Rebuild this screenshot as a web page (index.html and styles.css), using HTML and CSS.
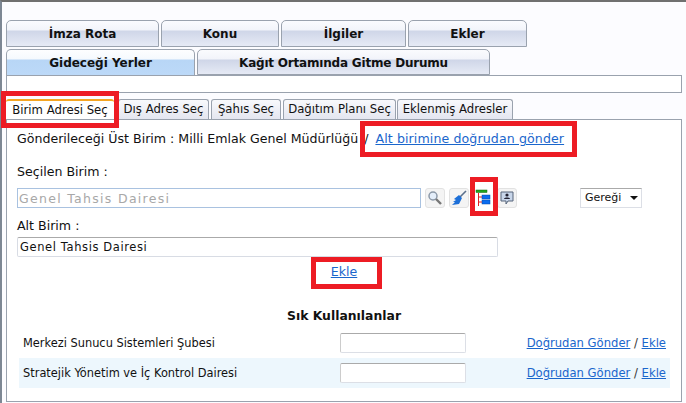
FILE: index.html
```html
<!DOCTYPE html>
<html lang="tr">
<head>
    <meta charset="UTF-8" />
    <title>Gideceği Yerler</title>
    <link rel="stylesheet" href="styles.css">
</head>
<body>
    <div class="page">
        <div class="tabs tabs-first">
            <div class="tab w-imza">İmza Rota</div>
            <div class="tab w-konu">Konu</div>
            <div class="tab w-ilgi">İlgiler</div>
            <div class="tab w-ekler">Ekler</div>
        </div>
        <div class="tabs tabs-second">
            <div class="tab tab-active w-gidecek">Gideceği Yerler</div>
            <div class="tab w-kagit">Kağıt Ortamında Gitme Durumu</div>
        </div>
        <div class="strip"></div>
        <div class="subtabs">
            <div class="subtab subtab-active w-birim">Birim Adresi Seç</div>
            <div class="subtab w-dis">Dış Adres Seç</div>
            <div class="subtab w-sahis">Şahıs Seç</div>
            <div class="subtab w-dagitim">Dağıtım Planı Seç</div>
            <div class="subtab w-eklenmis">Eklenmiş Adresler</div>
        </div>
        <div class="panel">
            <div class="parent-line">
                <span>Gönderileceği Üst Birim : Milli Emlak Genel Müdürlüğü</span>
                <span class="slash">/</span>
                <a href="#" class="link">Alt birimine doğrudan gönder</a>
            </div>
            <div class="label label-selected">Seçilen Birim :</div>
            <div class="selected-row">
                <input class="field field-selected" type="text" value="Genel Tahsis Dairesi" disabled />
                <div class="icons">
                    <button class="icon-btn">
                        <svg width="16" height="16" viewBox="0 0 16 16"><circle cx="6" cy="6" r="4" fill="#e4eefa" stroke="#8b98a8" stroke-width="1.5"/><path d="M9 9l5 5" stroke="#777" stroke-width="2.4"/></svg>
                    </button>
                    <button class="icon-btn">
                        <svg width="16" height="16" viewBox="0 0 16 16"><path d="M15 1L9 7" stroke="#5a6f8c" stroke-width="1.6"/><path d="M8 5l3 3-3 6-7 1 3-3-2 0 3-2-2-1z" fill="#1c6fd8"/></svg>
                    </button>
                    <button class="icon-btn icon-btn-plain">
                        <svg width="16" height="18" viewBox="0 0 16 18"><rect x="1" y="1" width="11" height="2.500" fill="#1fa51f" stroke="#116611" stroke-width=".5"/><path d="M3.500 4V17M3.500 8H7M3.500 13H7" stroke="#e02020" stroke-width="1" fill="none"/><rect x="7" y="6" width="8" height="4" fill="#0a6cf0" stroke="#0747a8" stroke-width=".5"/><rect x="7" y="11" width="8" height="4" fill="#0a6cf0" stroke="#0747a8" stroke-width=".5"/></svg>
                    </button>
                    <button class="icon-btn">
                        <svg width="16" height="16" viewBox="0 0 16 16"><path d="M2 2h12v9h-5l-2 3v-3H2z" fill="#c8d6ea" stroke="#56657a"/><circle cx="8" cy="5" r="1.600" fill="#223"/><path d="M5 9c0-2 6-2 6 0z" fill="#223"/></svg>
                    </button>
                </div>
                <div class="select-box">Gereği<span class="caret"></span></div>
            </div>
            <div class="label label-sub">Alt Birim :</div>
            <input class="field field-sub" type="text" value="Genel Tahsis Dairesi" />
            <div class="add-line"><a href="#" class="link">Ekle</a></div>
            <div class="fav-title">Sık Kullanılanlar</div>
            <div class="fav-row">
                <span class="fav-name">Merkezi Sunucu Sistemleri Şubesi</span>
                <input class="fav-input" type="text" />
                <span class="fav-links"><a href="#" class="link">Doğrudan Gönder</a> / <a href="#" class="link">Ekle</a></span>
            </div>
            <div class="fav-row fav-row-alt">
                <span class="fav-name">Stratejik Yönetim ve İç Kontrol Dairesi</span>
                <input class="fav-input" type="text" />
                <span class="fav-links"><a href="#" class="link">Doğrudan Gönder</a> / <a href="#" class="link">Ekle</a></span>
            </div>
        </div>
    </div>
    <div class="mark mark-tab"></div>
    <div class="mark mark-link"></div>
    <div class="mark mark-icon"></div>
    <div class="mark mark-add"></div>
</body>
</html>
```
FILE: styles.css
```css
html, body {
    margin: 0;
    padding: 0;
    height: 403px;
    overflow: hidden;
}

body {
    font-family: "DejaVu Sans", Verdana, sans-serif;
    font-size: 11px;
    color: #111;
    background-color: #fff;
    position: relative;
}

.page {
    box-sizing: border-box;
    height: 403px;
    padding: 20px 4px 0 4px;
    background-color: #fcfcff;
    border-top: 2px solid #707070;
    border-left: 2px solid #7d8794;
}

.tabs {
    display: flex;
    gap: 2px;
}

.tabs-first {
    margin-top: -2px;
    height: 27px;
}

.tabs-second {
    margin-top: 2px;
    height: 26px;
}

.tab {
    box-sizing: border-box;
    border: 1px solid #9aa2ae;
    border-radius: 5px 5px 0 0;
    font-weight: bold;
    font-size: 12px;
    line-height: 26px;
    text-align: center;
    background: linear-gradient(#fafbfe 0, #f2f4fa 9px, #cfd6e8 10px, #e6eaf5 100%);
}

.tab-active {
    border-bottom: none;
    background: linear-gradient(#fdfeff 0, #f5f9fe 9px, #b8d6f6 10px, #bcd9f8 100%);
}

.w-imza { width: 153px; }
.w-konu { width: 118px; }
.w-ilgi { width: 125px; }
.w-ekler { width: 119px; }
.w-gidecek { width: 189px; }
.w-kagit { width: 293px; letter-spacing: -0.2px; }

.strip {
    box-sizing: border-box;
    height: 18px;
    width: 676px;
    border: 1px solid #9aa2ae;
    background-color: #fff;
}

.subtabs {
    display: flex;
    gap: 2px;
    margin-top: 6px;
    height: 20px;
}

.subtab {
    box-sizing: border-box;
    height: 20px;
    border: 1px solid #9aa2ae;
    border-bottom: none;
    border-radius: 3px 3px 0 0;
    font-size: 11.700px;
    line-height: 19px;
    text-align: center;
    white-space: nowrap;
    background: linear-gradient(#f8f9fc, #e4e6f0);
}

.subtab-active {
    border: none;
    border-top: 2px solid #f5a623;
    background: #fff;
}

.w-birim { width: 108px; margin-right: 2px; }
.w-dis { width: 91px; }
.w-sahis { width: 70px; }
.w-dagitim { width: 113px; }
.w-eklenmis { width: 116px; margin-left: -1px; }

.panel {
    box-sizing: border-box;
    width: 676px;
    height: 283px;
    border: 1px solid #9aa2ae;
    background-color: #fff;
    padding: 0 10px;
}

.parent-line {
    margin-top: 11px;
    font-size: 12.600px;
    line-height: 16px;
    white-space: nowrap;
}

.slash {
    margin: 0 3px 0 2px;
}

.link {
    color: #1a66cc;
    text-decoration: underline;
}

.parent-line .link {
    letter-spacing: 0.1px;
}

.label {
    font-size: 12.600px;
    line-height: 15px;
}

.label-selected {
    margin-top: 17px;
}

.selected-row {
    display: flex;
    align-items: center;
    margin-top: 9px;
    height: 20px;
}

.field {
    box-sizing: border-box;
    font-family: "DejaVu Sans", Verdana, sans-serif;
    margin: 0;
    display: block;
    background-color: #fff;
}

.field-selected {
    width: 404px;
    height: 20px;
    font-size: 12.500px;
    letter-spacing: 1.300px;
    padding: 0 1px;
    color: #a8a8a8;
    border: 1px solid #a9c2e0;
}

.field-sub {
    width: 481px;
    height: 20px;
    font-size: 11.500px;
    letter-spacing: 0.600px;
    padding: 0 2px;
    color: #111;
    border: 1px solid #d8dce4;
    border-top-color: #aaa;
    border-radius: 2px;
    margin-top: 4px;
}

.icons {
    display: flex;
    gap: 4px;
    margin-left: 4px;
}

.icon-btn {
    box-sizing: border-box;
    width: 20px;
    height: 20px;
    padding: 0;
    display: flex;
    align-items: center;
    justify-content: center;
    background-color: #f4f4f4;
    border: 1px solid #e2e2e2;
    border-radius: 3px;
}

.icon-btn-plain {
    background-color: #fff;
    border-color: #fff;
}

.select-box {
    box-sizing: border-box;
    width: 62px;
    height: 20px;
    margin-left: 63px;
    padding-left: 4px;
    border: 1px solid #dcdfe6;
    border-top-color: #aaa;
    font-size: 11px;
    line-height: 18px;
    position: relative;
}

.caret {
    position: absolute;
    right: 3px;
    top: 7px;
    border-left: 4px solid transparent;
    border-right: 4px solid transparent;
    border-top: 4px solid #111;
}

.label-sub {
    margin-top: 10px;
}

.add-line {
    width: 654px;
    text-align: center;
    margin-top: 7px;
    font-size: 12.600px;
    line-height: 15px;
}

.fav-title {
    margin-top: 29px;
    text-align: center;
    font-weight: bold;
    font-size: 12.400px;
    line-height: 15px;
}

.fav-row {
    display: flex;
    align-items: center;
    height: 30px;
    margin: 5px 0 0 2px;
    width: 651px;
    box-sizing: border-box;
    padding: 0 4px;
    font-size: 11.400px;
}

.fav-row-alt {
    margin-top: 0;
    background-color: #edf7fd;
}

.fav-name {
    width: 317px;
    white-space: nowrap;
}

.fav-input {
    box-sizing: border-box;
    width: 126px;
    height: 20px;
    margin: 0;
    background-color: #fff;
    border: 1px solid #dcdfe6;
    border-top-color: #aaa;
    border-left-color: #ccc;
    border-radius: 2px;
}

.fav-links {
    margin-left: auto;
    white-space: nowrap;
    color: #333;
    font-size: 11.600px;
}

.mark {
    position: absolute;
    box-sizing: border-box;
    border: 5px solid #ed1c24;
}

.mark-tab { left: 1px; top: 91px; width: 118px; height: 37px; }
.mark-link { left: 360px; top: 121px; width: 217px; height: 36px; }
.mark-icon { left: 470px; top: 177px; width: 28px; height: 39px; }
.mark-add { left: 311px; top: 257px; width: 71px; height: 32px; }
```
